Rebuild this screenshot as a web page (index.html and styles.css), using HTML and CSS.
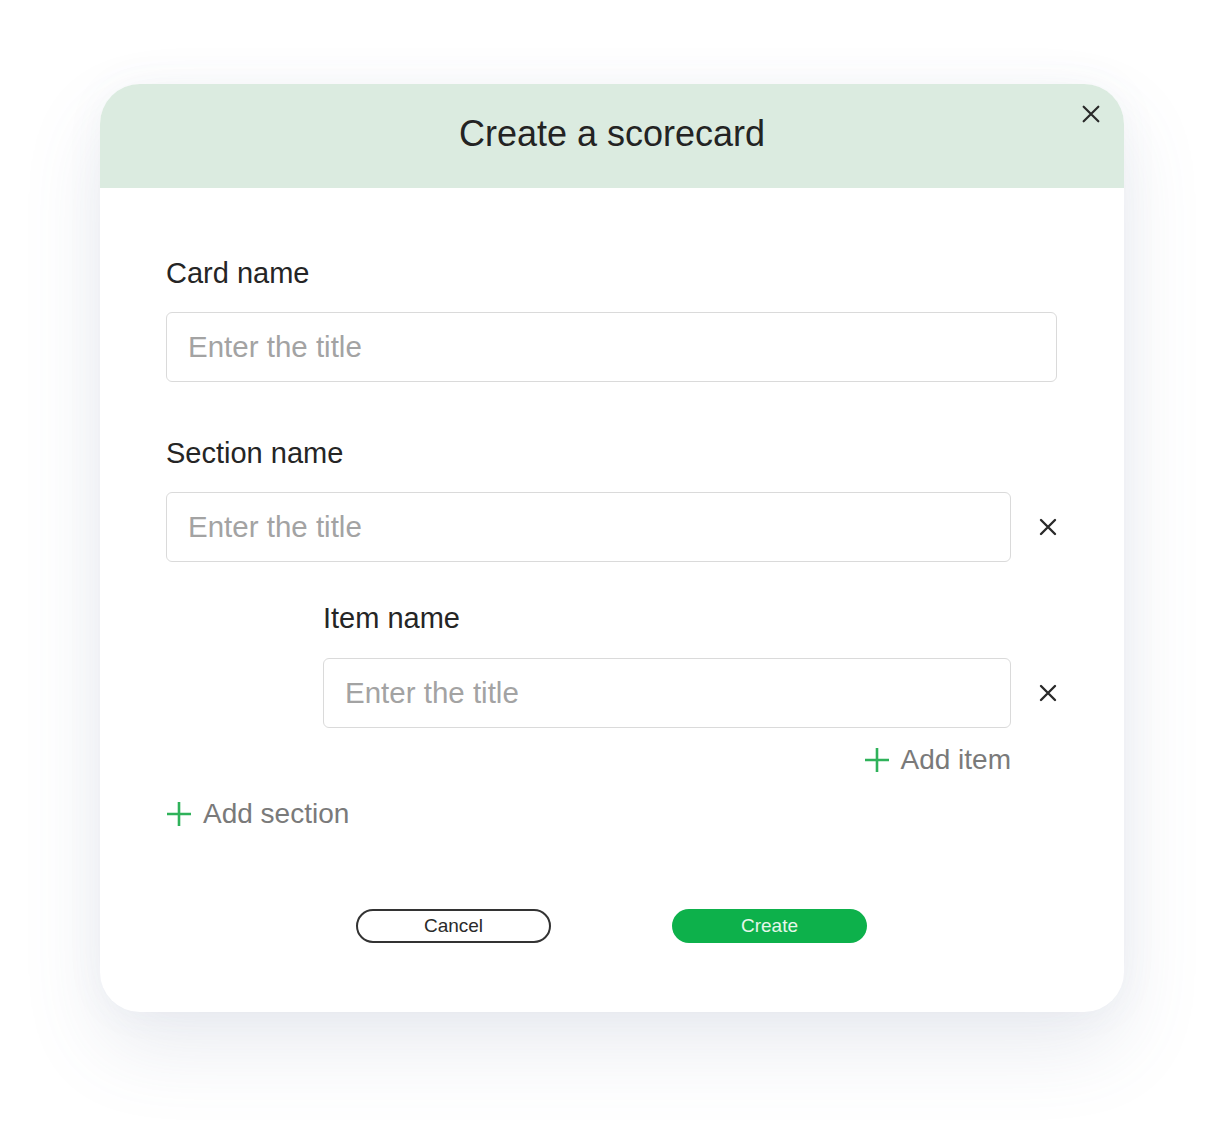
FILE: index.html
```html
<!DOCTYPE html>
<html lang="en">
<head>
    <meta charset="UTF-8">
    <meta name="viewport" content="width=device-width, initial-scale=1.0">
    <title>Create a scorecard</title>
    <link rel="stylesheet" href="styles.css">
</head>
<body>

<div class="page">
    <div class="modal">
        <div class="modal-header">
            <h1>Create a scorecard</h1>
            <button class="close-btn" aria-label="Close">
                <svg viewBox="0 0 24 24" width="22" height="22"><path d="M4 4L20 20M20 4L4 20" stroke="#2a2a2a" stroke-width="2.4" stroke-linecap="round"/></svg>
            </button>
        </div>

        <div class="modal-body">
            <div class="form-group">
                <label for="cardName">Card name</label>
                <input type="text" id="cardName" placeholder="Enter the title">
            </div>

            <div class="form-group section">
                <label for="sectionName">Section name</label>
                <div class="input-row">
                    <input type="text" id="sectionName" placeholder="Enter the title">
                    <button class="remove-btn" aria-label="Remove section">
                        <svg viewBox="0 0 24 24" width="24" height="24"><path d="M5 5L19 19M19 5L5 19" stroke="#2a2a2a" stroke-width="2.4" stroke-linecap="round"/></svg>
                    </button>
                </div>

                <div class="item-group">
                    <label for="itemName">Item name</label>
                    <div class="input-row">
                        <input type="text" id="itemName" placeholder="Enter the title">
                        <button class="remove-btn" aria-label="Remove item">
                            <svg viewBox="0 0 24 24" width="24" height="24"><path d="M5 5L19 19M19 5L5 19" stroke="#2a2a2a" stroke-width="2.4" stroke-linecap="round"/></svg>
                        </button>
                    </div>
                    <div class="add-row">
                        <button class="add-btn">
                            <svg viewBox="0 0 26 26" width="26" height="26"><path d="M13 1V25M1 13H25" stroke="#2fb25a" stroke-width="2.6"/></svg>
                            Add item
                        </button>
                    </div>
                </div>
            </div>

            <button class="add-btn add-section">
                <svg viewBox="0 0 26 26" width="26" height="26"><path d="M13 1V25M1 13H25" stroke="#2fb25a" stroke-width="2.6"/></svg>
                Add section
            </button>

            <div class="actions">
                <button class="btn btn-cancel">Cancel</button>
                <button class="btn btn-create">Create</button>
            </div>
        </div>
    </div>
</div>

</body>
</html>
```

FILE: styles.css
```css
/* Base */
body {
    margin: 0;
    padding: 0;
    background-color: #fff;
    font-family: 'Liberation Sans', Arial, sans-serif;
    color: #252525;
}

.page {
    padding: 84px 0 116px 100px;
}

/* Modal card */
.modal {
    width: 1024px;
    height: 928px;
    background-color: #fff;
    border-radius: 40px;
    overflow: hidden;
    box-shadow: 0 36px 80px rgba(90, 110, 150, 0.13), 0 0 40px rgba(90, 110, 150, 0.05);
}

.modal-header {
    position: relative;
    height: 104px;
    background-color: #dbebe0;
    display: flex;
    align-items: center;
    justify-content: center;
}

.modal-header h1 {
    margin: 0 0 4px;
    font-size: 36px;
    font-weight: normal;
    color: #232323;
}

.close-btn {
    position: absolute;
    top: 19px;
    right: 22px;
    padding: 0;
    border: none;
    background: none;
    display: flex;
    cursor: pointer;
}

.modal-body {
    padding: 69px 67px 0 66px;
}

/* Form */
.form-group {
    margin-bottom: 55px;
}

label {
    display: block;
    font-size: 29px;
    line-height: 32px;
    color: #252525;
    margin-bottom: 23px;
}

input[type="text"] {
    box-sizing: border-box;
    width: 100%;
    height: 70px;
    padding: 0 21px;
    border: 1.5px solid #dadada;
    border-radius: 6px;
    font-family: inherit;
    font-size: 29.5px;
    color: #333;
    outline: none;
}

input::placeholder {
    color: #a3a3a3;
}

.input-row {
    display: flex;
    align-items: center;
}

.input-row input[type="text"] {
    flex: 1;
}

.remove-btn {
    width: 24px;
    height: 24px;
    margin-left: 25px;
    margin-right: -3px;
    padding: 0;
    border: none;
    background: none;
    display: flex;
    cursor: pointer;
}

.section {
    margin-bottom: 0;
}

.item-group {
    padding-left: 157px;
    margin-top: 40px;
}

.item-group label {
    margin-bottom: 24px;
}

.add-row {
    display: flex;
    justify-content: flex-end;
    padding-right: 46px;
    margin-top: 18px;
}

.add-btn {
    display: flex;
    align-items: center;
    gap: 11px;
    padding: 0;
    border: none;
    background: none;
    font-family: inherit;
    font-size: 28px;
    line-height: 28px;
    color: #7a7a7a;
    cursor: pointer;
}

.add-section {
    margin-top: 26px;
}

/* Buttons */
.actions {
    display: flex;
    justify-content: center;
    gap: 121px;
    margin-top: 81px;
}

.btn {
    box-sizing: border-box;
    width: 195px;
    height: 34px;
    border-radius: 17px;
    font-family: inherit;
    font-size: 19px;
    cursor: pointer;
}

.btn-cancel {
    background-color: #fff;
    border: 2px solid #333;
    color: #2a2a2a;
}

.btn-create {
    background-color: #0db14b;
    border: none;
    color: #e6f7ea;
}
```
